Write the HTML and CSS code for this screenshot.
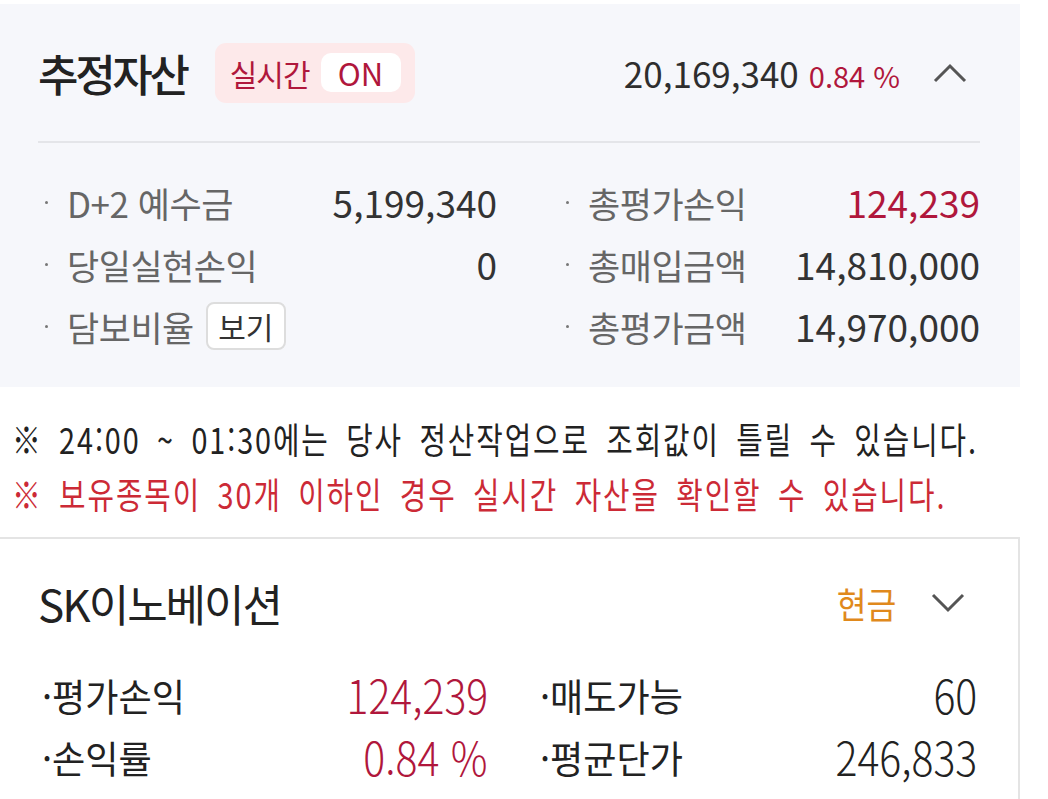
FILE: index.html
```html
<!DOCTYPE html>
<html lang="ko">
<head>
<meta charset="utf-8">
<link rel="stylesheet" href="styles.css">
</head>
<body>
<section class="summary">
  <div class="head">
    <h1 class="title">추정자산</h1>
    <div class="badge"><span class="badge-label">실시간</span><span class="badge-on">ON</span></div>
    <div class="total"><span class="total-num">20,169,340</span><span class="total-rate">0.84 %</span></div>
    <svg class="chev" width="34" height="20" viewBox="0 0 34 20"><path d="M2 18 L17 3 L32 18" fill="none" stroke="#555" stroke-width="3"/></svg>
  </div>
  <div class="grid">
    <div class="item"><span class="lbl">D+2 예수금</span><span class="val">5,199,340</span></div>
    <div class="item"><span class="lbl">총평가손익</span><span class="val red">124,239</span></div>
    <div class="item"><span class="lbl">당일실현손익</span><span class="val">0</span></div>
    <div class="item"><span class="lbl">총매입금액</span><span class="val">14,810,000</span></div>
    <div class="item"><span class="lbl">담보비율</span><span class="btn">보기</span></div>
    <div class="item"><span class="lbl">총평가금액</span><span class="val">14,970,000</span></div>
  </div>
</section>
<div class="notes">
  <p class="note">※ 24:00 ~ 01:30에는 당사 정산작업으로 조회값이 틀릴 수 있습니다.</p>
  <p class="note note-red">※ 보유종목이 30개 이하인 경우 실시간 자산을 확인할 수 있습니다.</p>
</div>
<section class="card">
  <div class="card-head">
    <h2 class="stock">SK이노베이션</h2>
    <span class="type">현금</span>
    <svg class="chev" width="34" height="20" viewBox="0 0 34 20"><path d="M2 2 L17 17 L32 2" fill="none" stroke="#555" stroke-width="3"/></svg>
  </div>
  <div class="card-grid">
    <div class="citem"><span class="clbl">·평가손익</span><span class="cval red">124,239</span></div>
    <div class="citem"><span class="clbl">·매도가능</span><span class="cval">60</span></div>
    <div class="citem"><span class="clbl">·손익률</span><span class="cval red">0.84 %</span></div>
    <div class="citem"><span class="clbl">·평균단가</span><span class="cval">246,833</span></div>
  </div>
</section>
</body>
</html>
```

FILE: styles.css
```css
html, body {
  margin: 0;
  padding: 0;
  background: #ffffff;
  font-family: "Noto Sans CJK KR", "Noto Sans", sans-serif;
  color: #333;
}
.summary {
  margin-top: 4px;
  width: 1020px;
  height: 383px;
  background: #f6f7fb;
  box-sizing: border-box;
  padding: 0 40px 0 38px;
}
.head {
  height: 139px;
  display: flex;
  align-items: center;
  border-bottom: 2px solid #e4e5e9;
  box-sizing: border-box;
}
.title {
  margin: 0;
  font-size: 44px;
  font-weight: 500;
  letter-spacing: -3.3px;
  color: #222;
}
.badge {
  margin-left: 28px;
  height: 60px;
  width: 200px;
  box-sizing: border-box;
  background: #fde9ea;
  border-radius: 11px;
  display: flex;
  align-items: center;
  padding-left: 15px;
}
.badge-label {
  font-size: 30px;
  letter-spacing: -1px;
  color: #b0173c;
}
.badge-on {
  margin-left: 11px;
  width: 80px;
  height: 39px;
  background: #fff;
  border-radius: 10px;
  display: flex;
  align-items: center;
  justify-content: center;
  font-size: 31px;
  color: #b0173c;
}
.total {
  margin-left: auto;
  display: flex;
  align-items: baseline;
}
.total-num {
  font-size: 35px;
  color: #2e2e2e;
}
.total-rate {
  margin-left: 10px;
  font-size: 29px;
  color: #b0173c;
}
.chev {
  margin-left: 33px;
  margin-right: 13px;
}
.grid {
  display: grid;
  grid-template-columns: 459px 421px;
  column-gap: 62px;
  padding-top: 28px;
}
.item {
  height: 62px;
  display: flex;
  align-items: center;
  justify-content: space-between;
  padding-left: 29px;
  position: relative;
}
.item::before {
  content: "";
  position: absolute;
  left: 7px;
  top: 30px;
  width: 3px;
  height: 3px;
  border-radius: 50%;
  background: #777;
}
.lbl {
  font-size: 35px;
  color: #666;
  letter-spacing: -0.5px;
}
.val {
  font-size: 37px;
  color: #333;
}
.red {
  color: #b0173c;
}
.btn {
  margin-right: auto;
  margin-left: 12px;
  height: 48px;
  width: 80px;
  box-sizing: border-box;
  border: 2px solid #dddddd;
  border-radius: 8px;
  background: #fff;
  display: flex;
  align-items: center;
  justify-content: center;
  font-size: 30px;
  color: #333;
}
.notes {
  padding: 24px 0 0 12px;
  height: 150px;
  box-sizing: border-box;
}
.note {
  margin: 0;
  height: 55px;
  line-height: 55px;
  font-size: 36px;
  letter-spacing: 2.4px;
  word-spacing: 8px;
  color: #222;
  white-space: nowrap;
  transform: scaleX(0.8);
  transform-origin: left center;
}
.note-red {
  color: #cc2a36;
}
.card {
  width: 1020px;
  height: 262px;
  box-sizing: border-box;
  border-top: 2px solid #e4e4e4;
  border-right: 2px solid #e4e4e4;
  padding: 0 43px 0 38px;
}
.card-head {
  height: 120px;
  padding-top: 4px;
  display: flex;
  align-items: center;
}
.stock {
  margin: 0;
  font-size: 44px;
  font-weight: 400;
  letter-spacing: -2px;
  color: #222;
}
.type {
  margin-left: auto;
  font-size: 36px;
  color: #e0891c;
  display: inline-block;
  transform: scaleX(0.9);
  transform-origin: right center;
}
.card-head .chev {
  margin-left: 35px;
  margin-right: 10px;
}
.card-grid {
  display: grid;
  grid-template-columns: 446px 437px;
  column-gap: 52px;
  padding-left: 4px;
}
.citem {
  height: 62px;
  display: flex;
  align-items: center;
  justify-content: space-between;
}
.clbl {
  font-size: 38px;
  color: #222;
  display: inline-block;
  transform: scaleX(0.95);
  transform-origin: left center;
}
.cval {
  font-size: 46px;
  font-weight: 300;
  color: #222;
  display: inline-block;
  transform: scaleX(0.89);
  transform-origin: right center;
}
.cval.red {
  color: #b0173c;
}
```
